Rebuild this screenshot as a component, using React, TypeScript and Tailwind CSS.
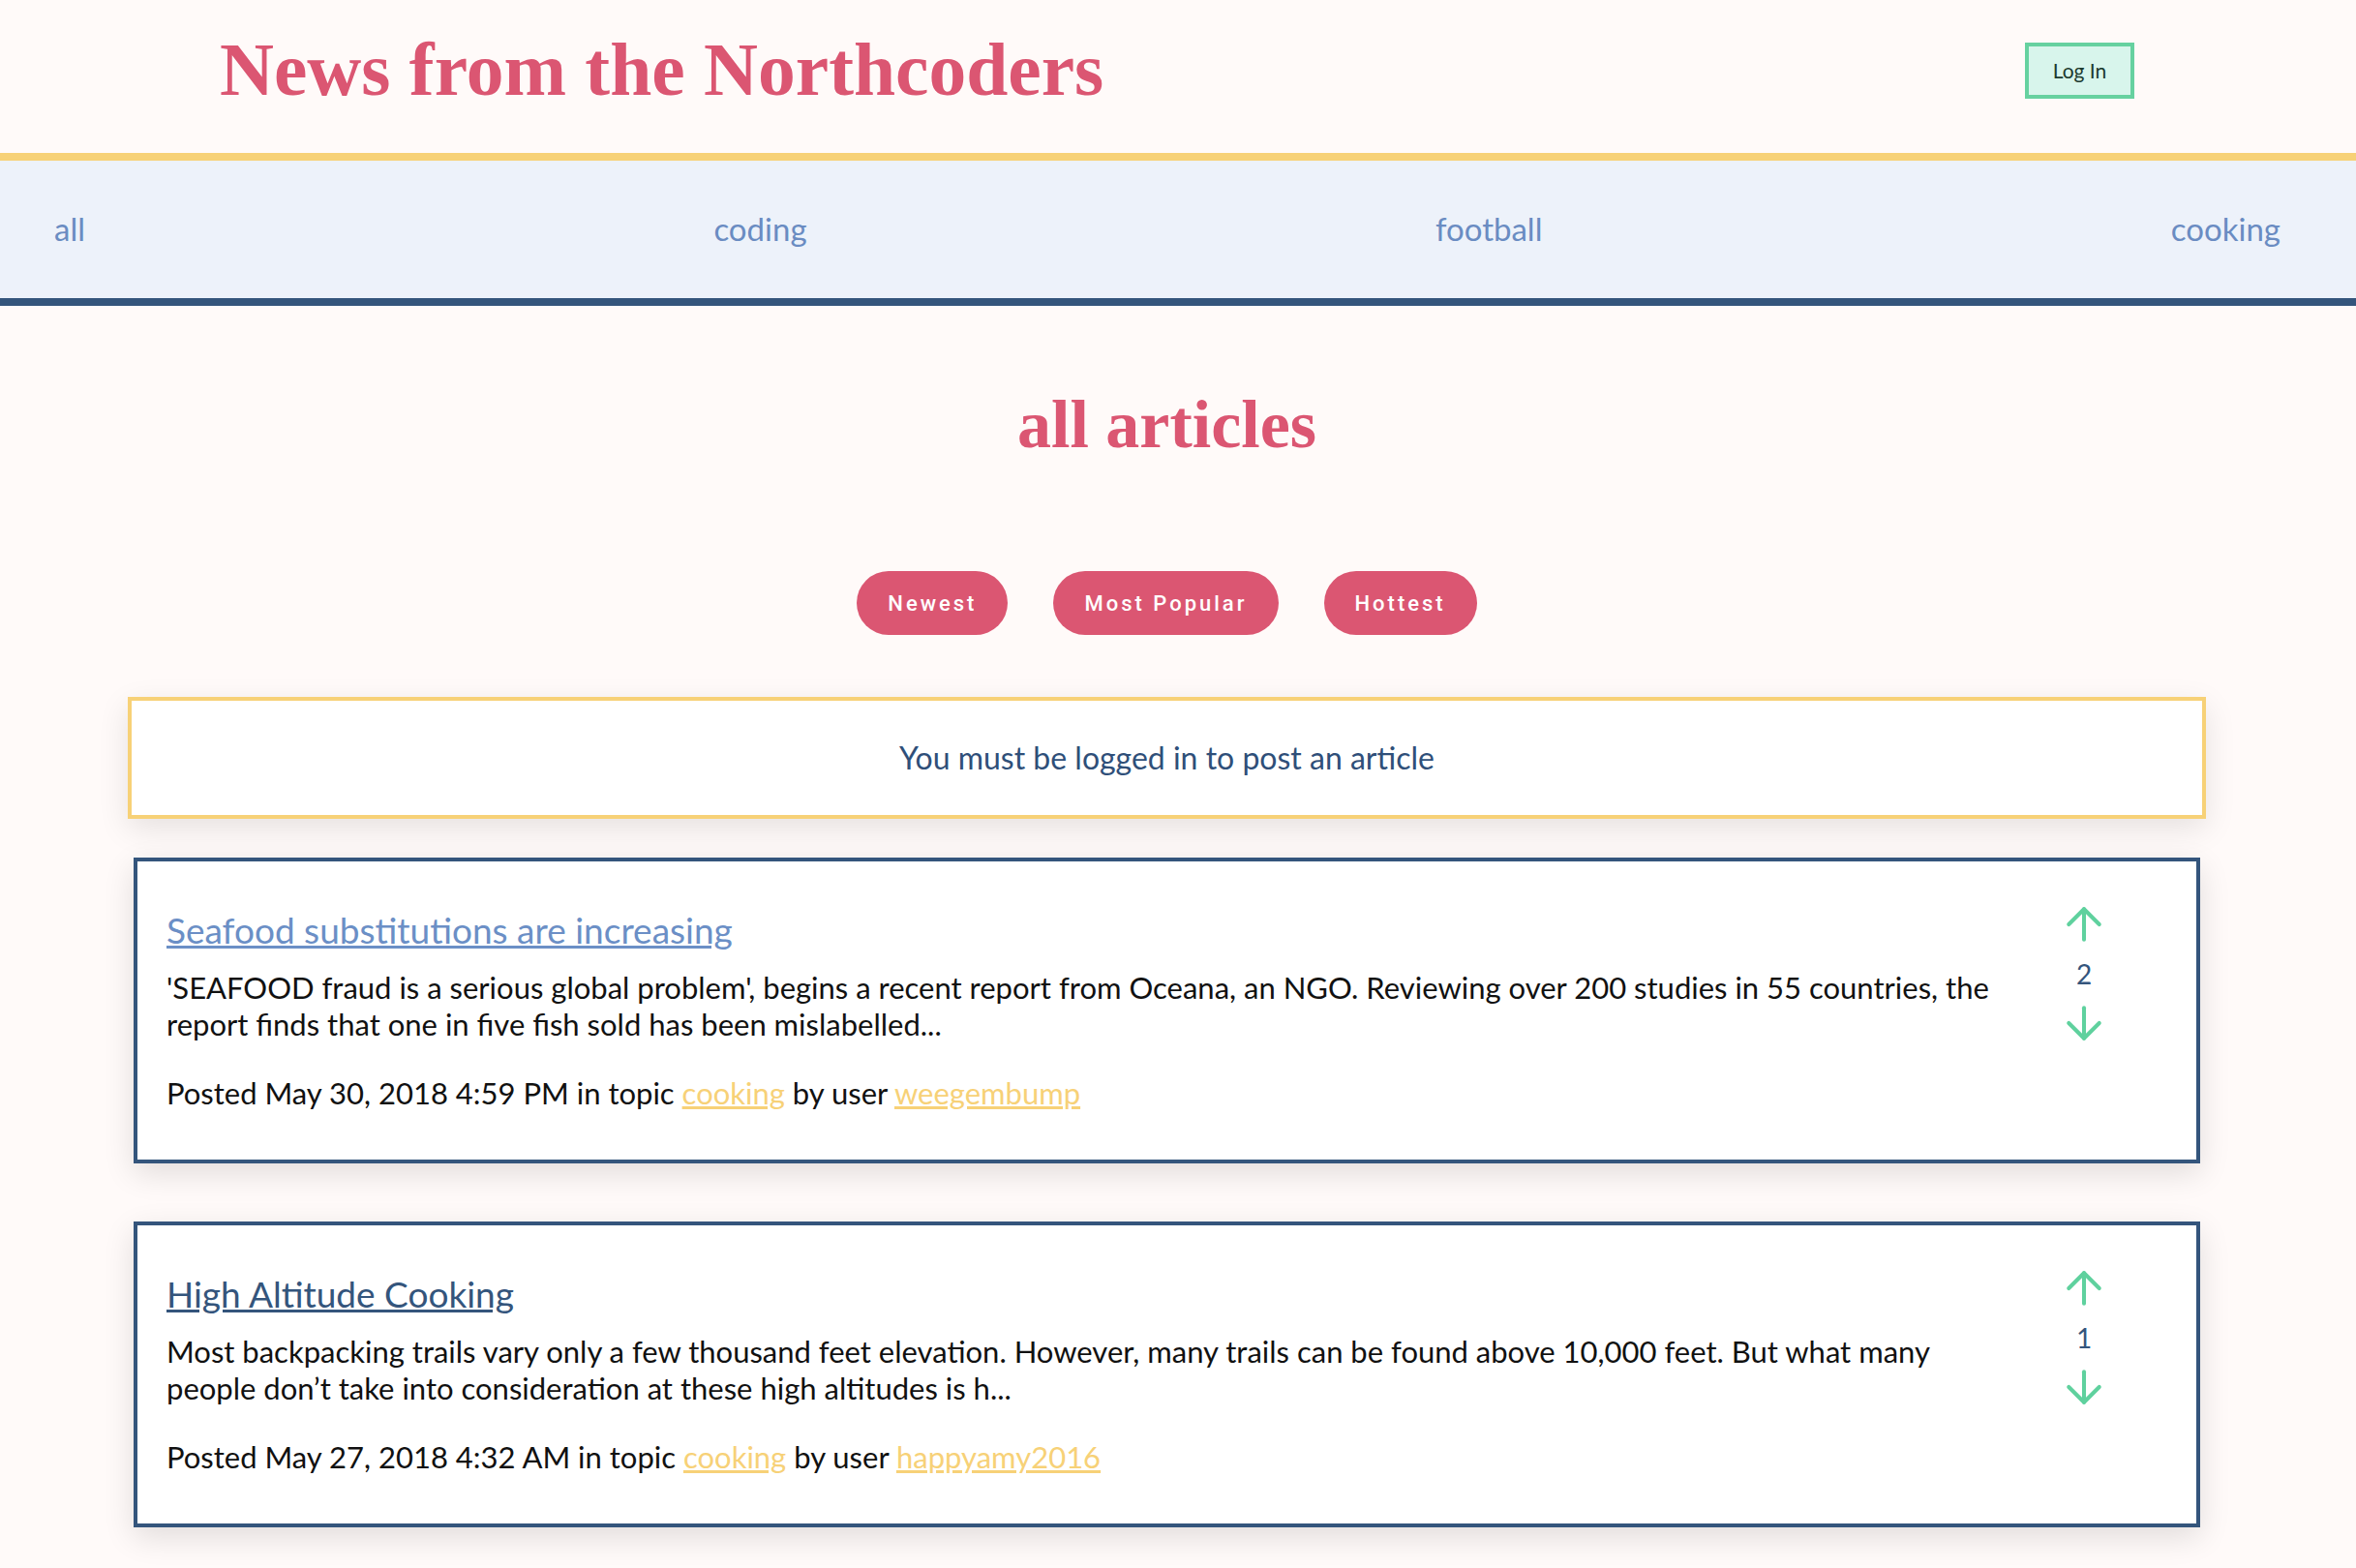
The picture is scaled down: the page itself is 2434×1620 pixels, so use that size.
import React from 'react';
import { ArrowUp, ArrowDown } from 'lucide-react';

interface Article {
  id: number;
  title: string;
  body: string;
  posted: string;
  topic: string;
  author: string;
  votes: number;
  visited: boolean;
}

const articles: Article[] = [
  {
    id: 1,
    title: 'Seafood substitutions are increasing',
    body: "'SEAFOOD fraud is a serious global problem', begins a recent report from Oceana, an NGO. Reviewing over 200 studies in 55 countries, the report finds that one in five fish sold has been mislabelled...",
    posted: 'May 30, 2018 4:59 PM',
    topic: 'cooking',
    author: 'weegembump',
    votes: 2,
    visited: true,
  },
  {
    id: 2,
    title: 'High Altitude Cooking',
    body: 'Most backpacking trails vary only a few thousand feet elevation. However, many trails can be found above 10,000 feet. But what many people don\u2019t take into consideration at these high altitudes is h...',
    posted: 'May 27, 2018 4:32 AM',
    topic: 'cooking',
    author: 'happyamy2016',
    votes: 1,
    visited: false,
  },
];

const topics = ['all', 'coding', 'football', 'cooking'];
const sorts = ['Newest', 'Most Popular', 'Hottest'];

const ArticleCard = ({ article, first }: { article: Article; first: boolean }) => {
  return (
    <div
      className={`${first ? 'mt-[40px]' : 'mt-[60px]'} mx-[6px] flex border-4 border-[#34557c] bg-white shadow-[0_10px_30px_rgba(0,0,0,0.12)]`}
    >
      {/* Article text */}
      <div className="flex-1 pl-[30px] pt-[50px] pb-[50px]">
        <a
          href="#"
          className={`block text-[37px] leading-[42px] underline ${article.visited ? 'text-[#6b8fc6]' : 'text-[#34557c]'}`}
        >
          {article.title}
        </a>
        <p className="mt-[19px] text-[31px] leading-[38px] text-[#111]">{article.body}</p>
        <p className="mt-[33px] text-[31px] leading-[38px] text-[#111]">
          Posted {article.posted} in topic{' '}
          <a href="#" className="text-[#f7d177] underline">
            {article.topic}
          </a>{' '}
          by user{' '}
          <a href="#" className="text-[#f7d177] underline">
            {article.author}
          </a>
        </p>
      </div>

      {/* Votes */}
      <div className="w-[148px] mr-[42px] pt-[38px] flex flex-col items-center gap-[10px]">
        <ArrowUp size={54} strokeWidth={1.8} className="text-[#5fd19e]" />
        <span className="text-[28px] leading-[28px] text-[#34557c]">{article.votes}</span>
        <ArrowDown size={54} strokeWidth={1.8} className="text-[#5fd19e]" />
      </div>
    </div>
  );
};

const App = () => {
  return (
    <div className="min-h-screen bg-[#fffaf9] font-['Lato','Noto_Sans',sans-serif]">
      {/* Header */}
      <header className="h-[158px] pb-[13px] pl-[227px] pr-[229px] flex items-center justify-between">
        <h1 className="text-[77.5px] leading-none font-bold text-[#db5672] font-['Liberation_Serif',serif]">
          News from the Northcoders
        </h1>
        <button className="w-[113px] h-[58px] border-4 border-[#66d1a0] bg-[#d8f5ec] text-[21px] text-[#1b3a2e]">
          Log In
        </button>
      </header>

      {/* Topics */}
      <nav className="h-[158px] border-t-8 border-b-8 border-t-[#f7d177] border-b-[#34557c] bg-[#edf2fa] pl-[56px] pr-[78px] flex items-center justify-between">
        {topics.map((t) => (
          <a key={t} href="#" className="text-[33px] text-[#6a8cc2]">
            {t}
          </a>
        ))}
      </nav>

      <main className="pl-[132px] pr-[155px] pb-[60px]">
        <h2 className="mt-[88px] text-center text-[70px] leading-none font-bold text-[#db5672] font-['Liberation_Serif',serif]">
          all articles
        </h2>

        {/* Sort buttons */}
        <div className="mt-[116px] flex justify-center gap-[47px]">
          {sorts.map((s) => (
            <button
              key={s}
              className="h-[66px] px-[32px] rounded-full bg-[#db5672] text-white text-[22px] font-medium tracking-[3px] font-['Roboto',sans-serif]"
            >
              {s}
            </button>
          ))}
        </div>

        {/* Post notice */}
        <div className="mt-[64px] h-[126px] border-4 border-[#f7d177] bg-white flex items-center justify-center shadow-[0_10px_30px_rgba(0,0,0,0.1)]">
          <p className="text-[32px] text-[#2f4f79]">You must be logged in to post an article</p>
        </div>

        {articles.map((a, i) => (
          <ArticleCard key={a.id} article={a} first={i === 0} />
        ))}
      </main>
    </div>
  );
};

export default App;
